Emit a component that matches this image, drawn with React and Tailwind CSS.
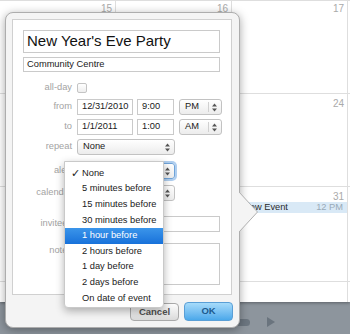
import React from "react";

function Stepper({ divider }) {
  return (
    <div className="flex items-center h-full">
      {divider && <div className="w-px h-[10px] bg-[#d0d0d0] mr-[3px]" />}
      <svg width="5" height="9" viewBox="0 0 5 9">
        <polygon points="2.5,0.5 5,3.5 0,3.5" fill="#555" />
        <polygon points="0,5.5 5,5.5 2.5,8.5" fill="#555" />
      </svg>
    </div>
  );
}

function Select({ value, w, divider, focus }) {
  return (
    <div
      className={
        "h-[16px] flex items-center justify-between pl-[5px] pr-[4px] rounded-[3px] border bg-linear-to-b from-white to-[#ececec] text-[9.3px] text-[#1a1a1a] " +
        (focus
          ? "border-[#6fa3d8] shadow-[0_0_0_2px_rgba(110,165,225,0.55)]"
          : "border-[#c2c2c2]")
      }
      style={{ width: w }}
    >
      <span>{value}</span>
      <Stepper divider={divider} />
    </div>
  );
}

function Input({ value, w, h = 16, cls = "" }) {
  return (
    <div
      className={
        "flex items-center px-[4px] border border-[#cacaca] bg-white text-[9.3px] text-[#1a1a1a] " +
        cls
      }
      style={{ width: w, height: h }}
    >
      {value}
    </div>
  );
}

function Label({ children, cls = "" }) {
  return (
    <div className={"w-[49px] shrink-0 text-right text-[9.3px] text-[#a3a3a3] " + cls}>
      {children}
    </div>
  );
}

const items = [
  "None",
  "5 minutes before",
  "15 minutes before",
  "30 minutes before",
  "1 hour before",
  "2 hours before",
  "1 day before",
  "2 days before",
  "On date of event",
];

export default function App() {
  return (
    <div className="relative w-[350px] h-[334px] overflow-hidden bg-white font-['Liberation_Sans',Arial,sans-serif]">
      {/* background calendar */}
      <div className="flex flex-col h-full">
        <div className="h-[302px] flex flex-col bg-white shadow-[0_1px_3px_rgba(0,0,0,0.35)] relative z-[1]">
          {/* row 1 */}
          <div className="h-[94px] flex border-t border-b border-[#dedede]">
            <div className="w-[116px] border-r border-[#dedede] flex justify-end pr-[3px] pt-[3px] text-[10px] leading-none text-[#aaa]">15</div>
            <div className="w-[116px] border-r border-[#dedede] flex justify-end pr-[3px] pt-[3px] text-[10px] leading-none text-[#aaa]">16</div>
            <div className="w-[116px] border-r border-[#dedede] flex justify-end pr-[3px] pt-[3px] text-[10px] leading-none text-[#aaa]">17</div>
          </div>
          {/* row 2 */}
          <div className="h-[93px] flex border-b border-[#dedede]">
            <div className="w-[116px] border-r border-[#dedede]" />
            <div className="w-[116px] border-r border-[#dedede]" />
            <div className="w-[116px] border-r border-[#dedede] flex justify-end pr-[3px] pt-[5px] text-[10px] leading-none text-[#aaa]">24</div>
          </div>
          {/* row 3 */}
          <div className="h-[95px] flex border-b border-[#dedede]">
            <div className="w-[116px] border-r border-[#dedede]" />
            <div className="w-[116px] border-r border-[#dedede]" />
            <div className="w-[116px] border-r border-[#dedede] flex flex-col">
              <div className="flex justify-end items-start pr-[3px] pt-[5px] h-[15px] text-[10px] leading-none text-[#aaa]">31</div>
              <div className="h-[11px] bg-[#d9e9f6] flex items-center justify-between pl-[11px] pr-[4px] text-[9.3px] leading-none">
                <span className="text-[#2a2a2a]">New Event</span>
                <span className="text-[#9aaab8]">12 PM</span>
              </div>
            </div>
          </div>
          <div className="flex-1 flex">
            <div className="w-[116px] border-r border-[#dedede]" />
            <div className="w-[116px] border-r border-[#dedede]" />
            <div className="w-[116px] border-r border-[#dedede]" />
          </div>
        </div>
        {/* toolbar */}
        <div className="flex-1 bg-[#8d959d] flex items-center pl-[236px] pt-[8px] gap-[16px]">
          <div className="w-[14px] h-[7px] rounded-full bg-[#6c7680]" />
          <svg width="10" height="10" viewBox="0 0 10 10">
            <polygon points="1,0 9,5 1,10" fill="#6a747e" />
          </svg>
        </div>
      </div>

      {/* popover */}
      <div className="absolute z-[2] left-[5px] top-[12px] w-[235px] h-[316px] rounded-[8px] bg-[#f4f4f4] border border-[#adadad] shadow-[0_2px_10px_rgba(0,0,0,0.35)] p-[6px] flex flex-col">
        <div className="w-[220px] h-[276px] border border-[#d0d0d0] bg-white pt-[10px] pl-[10px] flex flex-col">
          <div className="w-[197px] h-[23px] border border-[#cacaca] flex items-center pl-[3px] text-[15px] text-[#111]">
            New Year's Eve Party
          </div>
          <Input value="Community Centre" w={197} h={15} cls="mt-[4px] pl-[3px]" />

          <div className="flex items-center gap-[5px] mt-[9px] h-[14px]">
            <Label>all-day</Label>
            <div className="w-[10px] h-[10px] rounded-[2px] border border-[#c4c4c4] bg-linear-to-b from-white to-[#eee]" />
          </div>

          <div className="flex items-center gap-[5px] mt-[4px]">
            <Label>from</Label>
            <Input value="12/31/2010" w={56} />
            <Input value="9:00" w={37} cls="ml-[-1px]" />
            <Select value="PM" w={43} divider />
          </div>
          <div className="flex items-center gap-[5px] mt-[4px]">
            <Label>to</Label>
            <Input value="1/1/2011" w={56} />
            <Input value="1:00" w={37} cls="ml-[-1px]" />
            <Select value="AM" w={43} divider />
          </div>
          <div className="flex items-center gap-[5px] mt-[4px]">
            <Label>repeat</Label>
            <Select value="None" w={98} />
          </div>
          <div className="flex items-center gap-[5px] mt-[8px]">
            <Label>alert</Label>
            <Select value="" w={98} focus />
          </div>
          <div className="flex items-center gap-[5px] mt-[6px]">
            <Label>calendar</Label>
            <Select value="" w={98} />
          </div>
          <div className="flex items-center gap-[5px] mt-[15px]">
            <Label>invitees</Label>
            <Input value="" w={143} />
          </div>
          <div className="flex items-start gap-[5px] mt-[11px]">
            <Label cls="pt-[1px]">notes</Label>
            <Input value="" w={143} h={42} />
          </div>
        </div>
        <div className="flex justify-end items-end gap-[5px] mt-[7px]">
          <div className="w-[49px] h-[18px] rounded-[4px] border border-[#a9a9a9] bg-linear-to-b from-[#fdfdfd] to-[#dadada] flex items-center justify-center text-[9.5px] font-bold text-[#505050]">
            Cancel
          </div>
          <div className="w-[49px] h-[19px] rounded-[4px] border border-[#5a9fd6] bg-linear-to-b from-[#a6dbfa] to-[#4aa8ea] flex items-center justify-center text-[9.5px] font-bold text-[#1d5a8e]">
            OK
          </div>
        </div>
      </div>

      {/* popover arrow */}
      <svg className="absolute z-[3] left-[239px] top-[192px]" width="22" height="40" viewBox="0 0 22 40">
        <polygon points="0,0 18.5,20 0,40" fill="#f4f4f4" />
        <polyline points="0,0 18.5,20 0,40" fill="none" stroke="#b0b0b0" strokeWidth="1" />
      </svg>

      {/* alert dropdown menu */}
      <div className="absolute z-[4] left-[64px] top-[161px] w-[100px] pt-[4px] pb-[1px] bg-white border border-[#c9c9c9] rounded-b-[4px] shadow-[0_3px_9px_rgba(0,0,0,0.3)]">
        {items.map((t, i) => (
          <div
            key={t}
            className={
              "relative h-[15.6px] flex items-center pl-[17px] text-[9.3px] " +
              (i === 4
                ? "bg-linear-to-b from-[#3b95ea] to-[#1771da] text-white"
                : "text-[#1a1a1a]")
            }
          >
            {i === 0 && (
              <span className="absolute left-[6px] text-[11px] leading-none text-[#222]">✓</span>
            )}
            {t}
          </div>
        ))}
      </div>
    </div>
  );
}
